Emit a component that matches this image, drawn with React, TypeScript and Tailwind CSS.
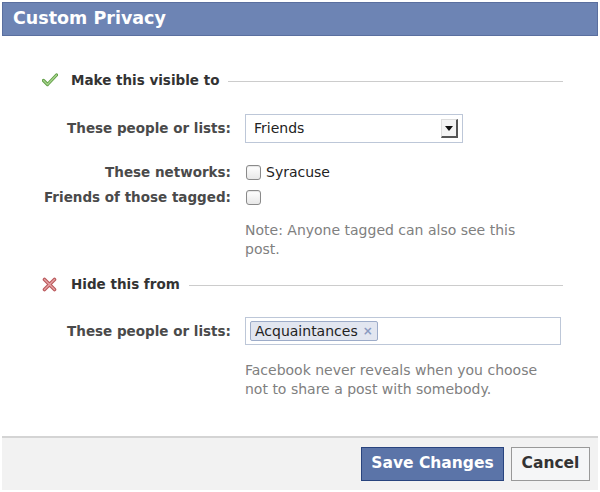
import React from "react";

const font = { fontFamily: '"DejaVu Sans", "Lucida Grande", sans-serif' };

function CheckIcon() {
  return (
    <svg width="16" height="14" viewBox="0 0 16 14">
      <path d="M1.5 7.5 L5.5 11.5 L14.5 2" fill="none" stroke="#5f9d45" strokeWidth="3.2" strokeLinecap="round" strokeLinejoin="round" />
      <path d="M1.5 7.5 L5.5 11.5 L14.5 2" fill="none" stroke="#a6d38c" strokeWidth="1.4" strokeLinecap="round" strokeLinejoin="round" />
    </svg>
  );
}

function XIcon() {
  return (
    <svg width="15" height="15" viewBox="0 0 15 15">
      <path d="M2.5 2.5 L12.5 12.5 M12.5 2.5 L2.5 12.5" fill="none" stroke="#b9585b" strokeWidth="3.6" strokeLinecap="round" />
      <path d="M2.5 2.5 L12.5 12.5 M12.5 2.5 L2.5 12.5" fill="none" stroke="#e6a3a5" strokeWidth="1.4" strokeLinecap="round" />
    </svg>
  );
}

function Checkbox() {
  return <span className="inline-block w-[15px] h-[15px] rounded-[3px] border border-[#8a8a8a] bg-gradient-to-b from-white to-[#e8e8e8] shadow-[inset_0_1px_1px_rgba(0,0,0,0.1)]" />;
}

function Heading({ icon, text }: { icon: React.ReactNode; text: string }) {
  return (
    <div className="flex items-center h-[18px] pl-[40px] pr-[35px]">
      <div className="w-[29px] flex items-center">{icon}</div>
      <span className="text-[13.5px] font-bold text-[#333] whitespace-nowrap">{text}</span>
      <div className="flex-1 ml-[9px] h-px bg-[#cccccc] mt-[2px]" />
    </div>
  );
}

export default function App() {
  return (
    <div className="w-[600px] h-[492px] bg-white p-[2px]" style={font}>
      <div className="w-[596px] h-[488px] flex flex-col bg-white">
        <div className="h-[34px] bg-[#6d84b4] border border-[#5a6f9f] flex items-center pl-[10px]">
          <span className="text-white font-bold text-[17.5px] leading-none">Custom Privacy</span>
        </div>

        <div className="mt-[35px]">
          <Heading icon={<CheckIcon />} text="Make this visible to" />
        </div>

        <div className="flex items-center mt-[25px]">
          <div className="w-[229px] text-right text-[13.5px] font-bold text-[#4a4a4a] whitespace-nowrap">These people or lists:</div>
          <div className="ml-[14px] w-[218px] h-[29px] border border-[#bdc7d8] flex items-center justify-between pl-[8px] pr-[4px] bg-white">
            <span className="text-[14px] text-[#222]">Friends</span>
            <span className="w-[17px] h-[19px] flex items-center justify-center border-r-2 border-b-2 border-r-[#555] border-b-[#555] border-t border-l border-t-[#ddd] border-l-[#ddd] bg-[#f4f4f4]">
              <svg width="8" height="5" viewBox="0 0 8 5"><path d="M0 0 H8 L4 5 Z" fill="#111" /></svg>
            </span>
          </div>
        </div>

        <div className="flex items-center mt-[20px] h-[18px]">
          <div className="w-[229px] text-right text-[13.5px] font-bold text-[#4a4a4a] whitespace-nowrap">These networks:</div>
          <div className="ml-[15px] flex items-center">
            <Checkbox />
            <span className="ml-[5px] text-[14px] text-[#222]">Syracuse</span>
          </div>
        </div>

        <div className="flex items-center mt-[7px] h-[18px]">
          <div className="w-[229px] text-right text-[13.5px] font-bold text-[#4a4a4a] whitespace-nowrap">Friends of those tagged:</div>
          <div className="ml-[15px] flex items-center">
            <Checkbox />
          </div>
        </div>

        <div className="ml-[243px] mt-[15px] w-[290px] text-[14px] leading-[19px] text-[#808080]">
          Note: Anyone tagged can also see this post.
        </div>

        <div className="mt-[16px]">
          <Heading icon={<XIcon />} text="Hide this from" />
        </div>

        <div className="flex items-center mt-[24px]">
          <div className="w-[229px] text-right text-[13.5px] font-bold text-[#4a4a4a] whitespace-nowrap">These people or lists:</div>
          <div className="ml-[14px] w-[316px] h-[28px] border border-[#bdc7d8] flex items-center pl-[4px] bg-white">
            <span className="h-[20px] flex items-center px-[4px] bg-[#e2e6f0] border border-[#9dacc9] rounded-[2px] text-[14px] text-[#222]">
              Acquaintances
              <span className="ml-[5px] text-[#8a9ac0] text-[12px] font-bold">×</span>
            </span>
          </div>
        </div>

        <div className="ml-[243px] mt-[16px] w-[310px] text-[14px] leading-[19px] text-[#808080]">
          Facebook never reveals when you choose not to share a post with somebody.
        </div>

        <div className="mt-auto h-[54px] bg-[#f2f2f2] border-t-2 border-[#d4d4d4] flex items-center justify-end pr-[8px] gap-[7px]">
          <button className="h-[34px] w-[143px] bg-[#5b74a8] border border-[#29447e] text-white font-bold text-[15.5px]">Save Changes</button>
          <button className="h-[34px] w-[79px] bg-[#f5f6f7] border border-[#999] text-[#333] font-bold text-[15.5px]">Cancel</button>
        </div>
      </div>
    </div>
  );
}
